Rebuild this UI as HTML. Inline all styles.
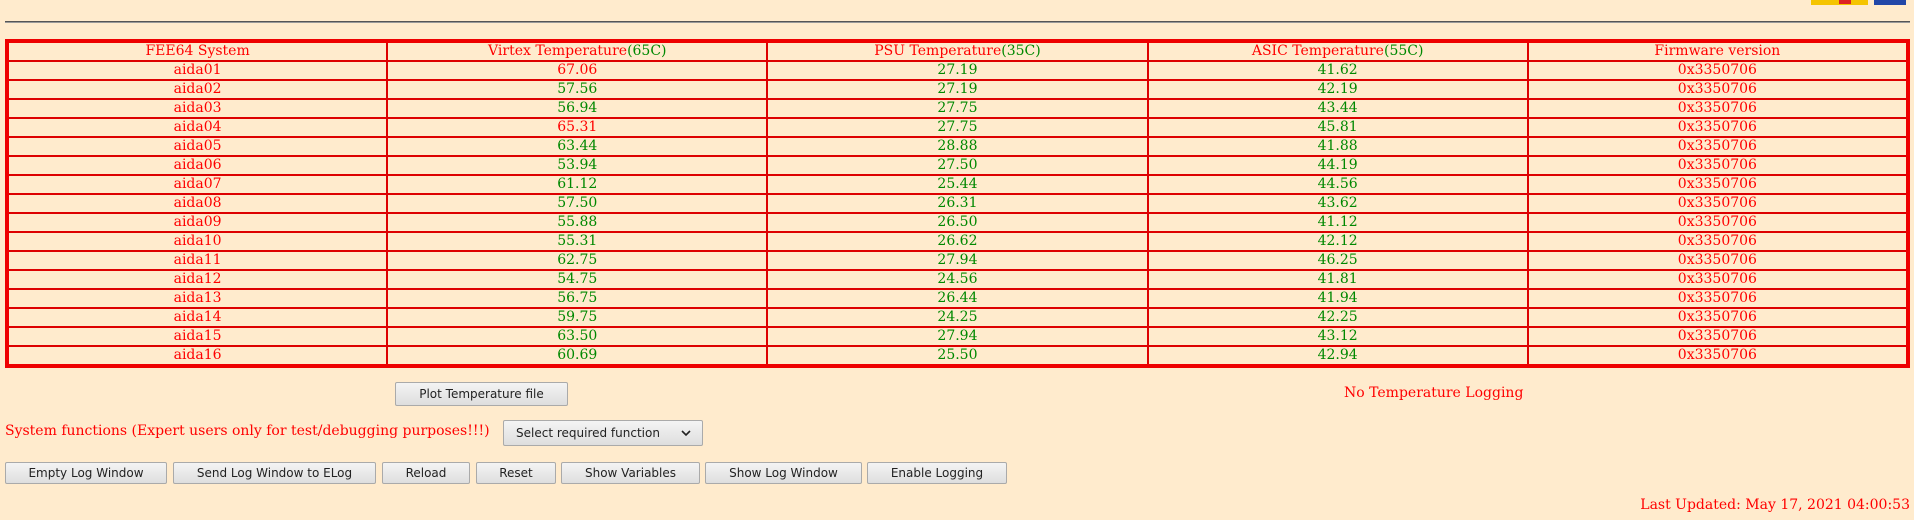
<!DOCTYPE html>
<html><head><meta charset="utf-8"><style>
html,body{margin:0;padding:0;background:#ffebcd;width:1914px;height:520px;overflow:hidden;position:relative;font-family:"DejaVu Serif","Liberation Serif",serif;}
.hr{position:absolute;left:5px;top:21px;width:1905px;height:0;border-top:1px solid #555;border-bottom:1px solid #999;}
table{position:absolute;left:5px;top:39px;width:1905px;height:329px;border-collapse:collapse;border:4px solid #e00;table-layout:fixed;}
td{border:2px solid #d00;text-align:center;font-size:14px;padding:0;line-height:15px;color:#f00;height:17px;}
.g{color:#080;}
.btn{position:absolute;height:22px;box-sizing:border-box;border:1px solid #aaa;border-radius:2px;background:linear-gradient(#f4f4f4,#dedede);font:12px "DejaVu Sans","Liberation Sans",sans-serif;color:#222;display:flex;align-items:center;justify-content:center;}
.t{position:absolute;color:#f00;font-size:14px;white-space:nowrap;}
</style></head><body>
<div style="position:absolute;left:1811px;top:0;width:57px;height:5px;background:#f5c400"><div style="position:absolute;left:28px;top:0;width:12px;height:4px;background:#d22"></div></div>
<div style="position:absolute;left:1874px;top:0;width:32px;height:5px;background:#2247a8"></div>
<div class="hr"></div>
<table>
<tr><td>FEE64 System</td><td>Virtex Temperature<span class="g">(65C)</span></td><td>PSU Temperature<span class="g">(35C)</span></td><td>ASIC Temperature<span class="g">(55C)</span></td><td>Firmware version</td></tr>
<tr><td>aida01</td><td>67.06</td><td class="g">27.19</td><td class="g">41.62</td><td>0x3350706</td></tr>
<tr><td>aida02</td><td class="g">57.56</td><td class="g">27.19</td><td class="g">42.19</td><td>0x3350706</td></tr>
<tr><td>aida03</td><td class="g">56.94</td><td class="g">27.75</td><td class="g">43.44</td><td>0x3350706</td></tr>
<tr><td>aida04</td><td>65.31</td><td class="g">27.75</td><td class="g">45.81</td><td>0x3350706</td></tr>
<tr><td>aida05</td><td class="g">63.44</td><td class="g">28.88</td><td class="g">41.88</td><td>0x3350706</td></tr>
<tr><td>aida06</td><td class="g">53.94</td><td class="g">27.50</td><td class="g">44.19</td><td>0x3350706</td></tr>
<tr><td>aida07</td><td class="g">61.12</td><td class="g">25.44</td><td class="g">44.56</td><td>0x3350706</td></tr>
<tr><td>aida08</td><td class="g">57.50</td><td class="g">26.31</td><td class="g">43.62</td><td>0x3350706</td></tr>
<tr><td>aida09</td><td class="g">55.88</td><td class="g">26.50</td><td class="g">41.12</td><td>0x3350706</td></tr>
<tr><td>aida10</td><td class="g">55.31</td><td class="g">26.62</td><td class="g">42.12</td><td>0x3350706</td></tr>
<tr><td>aida11</td><td class="g">62.75</td><td class="g">27.94</td><td class="g">46.25</td><td>0x3350706</td></tr>
<tr><td>aida12</td><td class="g">54.75</td><td class="g">24.56</td><td class="g">41.81</td><td>0x3350706</td></tr>
<tr><td>aida13</td><td class="g">56.75</td><td class="g">26.44</td><td class="g">41.94</td><td>0x3350706</td></tr>
<tr><td>aida14</td><td class="g">59.75</td><td class="g">24.25</td><td class="g">42.25</td><td>0x3350706</td></tr>
<tr><td>aida15</td><td class="g">63.50</td><td class="g">27.94</td><td class="g">43.12</td><td>0x3350706</td></tr>
<tr><td>aida16</td><td class="g">60.69</td><td class="g">25.50</td><td class="g">42.94</td><td>0x3350706</td></tr>
</table>
<div class="btn" style="left:395px;top:382px;width:173px;height:24px">Plot Temperature file</div>
<div class="t" style="left:1344px;top:385px;">No Temperature Logging</div>
<div class="t" style="left:5px;top:423px;">System functions (Expert users only for test/debugging purposes!!!)</div>
<div class="btn" style="left:503px;top:420px;width:200px;height:26px;justify-content:space-between;padding:0 10px 0 12px;"><span>Select required function</span><svg width="12" height="10" viewBox="0 0 12 10"><path d="M2 3 L6 7 L10 3" stroke="#222" stroke-width="1.6" fill="none"/></svg></div>
<div class="btn" style="left:5px;top:462px;width:162px">Empty Log Window</div>
<div class="btn" style="left:173px;top:462px;width:203px">Send Log Window to ELog</div>
<div class="btn" style="left:382px;top:462px;width:88px">Reload</div>
<div class="btn" style="left:476px;top:462px;width:80px">Reset</div>
<div class="btn" style="left:561px;top:462px;width:139px">Show Variables</div>
<div class="btn" style="left:705px;top:462px;width:157px">Show Log Window</div>
<div class="btn" style="left:867px;top:462px;width:140px">Enable Logging</div>
<div class="t" style="right:4px;top:497px;">Last Updated: May 17, 2021 04:00:53</div>
</body></html>
